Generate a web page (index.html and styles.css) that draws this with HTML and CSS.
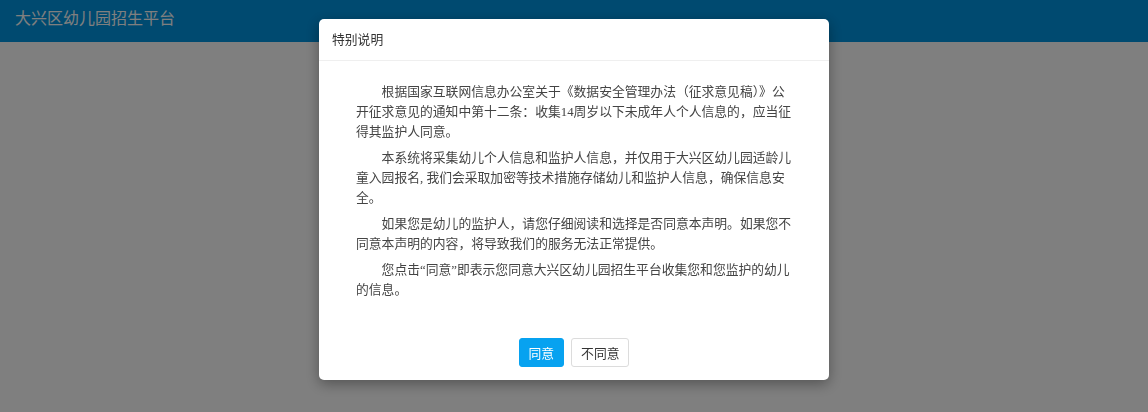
FILE: index.html
```html
<!DOCTYPE html>
<html lang="zh-CN">
<head>
    <meta charset="UTF-8">
    <meta name="viewport" content="width=device-width, initial-scale=1.0">
    <title>大兴区幼儿园招生平台</title>
    <link rel="stylesheet" href="styles.css">
</head>
<body>
    <div class="topbar">
        <div class="brand">大兴区幼儿园招生平台</div>
    </div>

    <div class="page"></div>

    <div class="mask">
        <div class="dialog">
            <div class="dialog-header">特别说明</div>
            <div class="dialog-body">
                <p>根据国家互联网信息办公室关于《数据安全管理办法（征求意见稿）》公开征求意见的通知中第十二条：收集14周岁以下未成年人个人信息的，应当征得其监护人同意。</p>
                <p>本系统将采集幼儿个人信息和监护人信息，并仅用于大兴区幼儿园适龄儿童入园报名, 我们会采取加密等技术措施存储幼儿和监护人信息，确保信息安全。</p>
                <p>如果您是幼儿的监护人，请您仔细阅读和选择是否同意本声明。如果您不同意本声明的内容，将导致我们的服务无法正常提供。</p>
                <p>您点击“同意”即表示您同意大兴区幼儿园招生平台收集您和您监护的幼儿的信息。</p>
            </div>
            <div class="dialog-footer">
                <button class="btn btn-primary">同意</button>
                <button class="btn">不同意</button>
            </div>
        </div>
    </div>
</body>
</html>
```

FILE: styles.css
```css
body {
    margin: 0;
    font-family: "Noto Sans CJK SC", sans-serif;
    background-color: #ffffff;
}

.topbar {
    height: 42px;
    background-color: #0094e0;
    padding: 0 15px;
}

.brand {
    color: #ffffff;
    font-size: 16px;
    line-height: 34px;
}

.page {
    height: 370px;
}

.mask {
    position: fixed;
    top: 0;
    left: 0;
    right: 0;
    bottom: 0;
    background-color: rgba(0, 0, 0, 0.5);
    display: flex;
    justify-content: center;
    align-items: flex-start;
    padding-top: 19px;
}

.dialog {
    width: 510px;
    background-color: #fff;
    border-radius: 5px;
    box-shadow: 0 4px 14px rgba(0, 0, 0, 0.35);
}

.dialog-header {
    padding: 9px 13px 11px;
    font-size: 12.8px;
    line-height: 21px;
    color: #333;
    border-bottom: 1px solid #efefef;
}

.dialog-body {
    padding: 21px 37px 19px;
}

.dialog-body p {
    margin: 0 0 6px;
    font-family: "Liberation Serif", "Noto Sans CJK SC", serif;
    font-size: 12.8px;
    line-height: 20px;
    text-indent: 2em;
    color: #444;
}

.dialog-footer {
    padding: 13px;
    display: flex;
    justify-content: center;
    gap: 7px;
}

.btn {
    font-family: "Noto Sans CJK SC", sans-serif;
    font-size: 12.8px;
    line-height: 19px;
    padding: 4px 9px;
    border: 1px solid #dcdcdc;
    border-radius: 3px;
    background-color: #fff;
    color: #333;
    cursor: pointer;
}

.btn-primary {
    background-color: #07a2f0;
    border-color: #07a2f0;
    color: #fff;
}
```
